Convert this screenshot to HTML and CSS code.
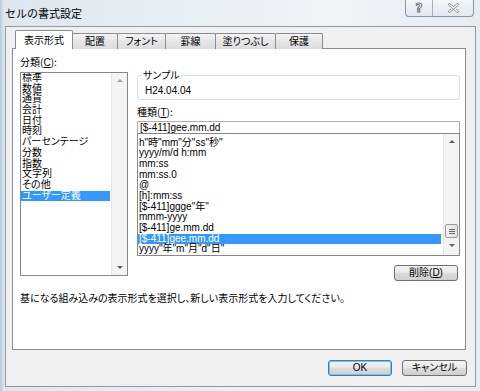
FILE: index.html
```html
<!DOCTYPE html>
<html lang="ja">
<head>
  <meta charset="UTF-8" />
  <title>セルの書式設定</title>
  <link rel="stylesheet" href="styles.css">
</head>
<body>
  <div class="window">
    <div class="titlebar">
      <span class="title">セルの書式設定</span>
      <div class="caption">
        <span class="cap-btn help">?</span>
        <span class="cap-btn close">
          <svg width="11" height="10" viewBox="0 0 11 10"><path d="M1.5 1.5 L9.5 8.5 M9.5 1.5 L1.5 8.5" stroke="#7d848c" stroke-width="2.6" stroke-linecap="round"/><path d="M1.5 1.5 L9.5 8.5 M9.5 1.5 L1.5 8.5" stroke="#ffffff" stroke-width="1.2" stroke-linecap="round"/></svg>
        </span>
      </div>
    </div>

    <div class="client">
      <div class="tabs">
        <span class="tab active">表示形式</span>
        <span class="tab t2">配置</span>
        <span class="tab t3">フォント</span>
        <span class="tab t4">罫線</span>
        <span class="tab t5">塗りつぶし</span>
        <span class="tab t6">保護</span>
      </div>

      <div class="panel">
        <div class="panel-main">
          <div class="category">
            <label class="field-label">分類(<u>C</u>):</label>
            <div class="listbox cat-list">
              <ul class="items">
                <li>標準</li>
                <li>数値</li>
                <li>通貨</li>
                <li>会計</li>
                <li>日付</li>
                <li>時刻</li>
                <li>パーセンテージ</li>
                <li>分数</li>
                <li>指数</li>
                <li>文字列</li>
                <li>その他</li>
                <li class="selected">ユーザー定義</li>
              </ul>
              <div class="scrollbar">
                <span class="arrow up"></span>
                <span class="track"></span>
                <span class="arrow down"></span>
              </div>
            </div>
          </div>

          <div class="format">
            <fieldset class="sample">
              <legend>サンプル</legend>
              <div class="sample-value">H24.04.04</div>
            </fieldset>

            <label class="field-label type-label">種類(<u>T</u>):</label>
            <div class="textbox">[$-411]gee.mm.dd</div>
            <div class="listbox type-list">
              <ul class="items">
                <li>h"時"mm"分"ss"秒"</li>
                <li>yyyy/m/d h:mm</li>
                <li>mm:ss</li>
                <li>mm:ss.0</li>
                <li>@</li>
                <li>[h]:mm:ss</li>
                <li>[$-411]ggge"年"</li>
                <li>mmm-yyyy</li>
                <li>[$-411]ge.mm.dd</li>
                <li class="selected">[$-411]gee.mm.dd</li>
                <li>yyyy"年"m"月"d"日"</li>
              </ul>
              <div class="scrollbar">
                <span class="arrow up"></span>
                <span class="track"></span>
                <span class="thumb"><i></i><i></i><i></i></span>
                <span class="arrow down"></span>
              </div>
            </div>
            <div class="btn-row">
              <button class="btn delete">削除(<u>D</u>)</button>
            </div>
          </div>
        </div>

        <p class="hint">基になる組み込みの表示形式を選択し、新しい表示形式を入力してください。</p>
      </div>

      <div class="dialog-buttons">
        <button class="btn default">OK</button>
        <button class="btn">キャンセル</button>
      </div>
    </div>
  </div>
</body>
</html>
```

FILE: styles.css
```css
body {
  margin: 0;
  font-family: "Liberation Sans", "Noto Sans CJK JP", sans-serif;
  font-size: 10px;
  color: #000;
  background: #d9e3ec;
}
.window {
  width: 480px;
  height: 391px;
  background: linear-gradient(90deg, #b9c9da 0, #dfe7ef 4px, #e9eef3 40%, #f1f4f7 70%, #e6ecf1 100%);
}
.titlebar {
  height: 26px;
  display: flex;
  justify-content: space-between;
  align-items: flex-start;
}
.title {
  font-family: "Noto Sans CJK JP", sans-serif;
  font-size: 11px;
  line-height: 26px;
  padding-left: 5px;
}
.caption {
  display: flex;
  margin-right: 6px;
  height: 16px;
  border: 1px solid #8d96a0;
  border-top: none;
  border-radius: 0 0 4px 4px;
  background: linear-gradient(#f4f6f8, #e3e8ed);
}
.cap-btn {
  display: flex;
  align-items: center;
  justify-content: center;
  height: 16px;
}
.help {
  width: 26px;
  font-family: "DejaVu Sans", sans-serif;
  font-weight: bold;
  font-size: 12px;
  color: #fff;
  -webkit-text-stroke: 1px #6f767e;
  border-right: 1px solid #a8b0b8;
}
.close {
  width: 40px;
}
.client {
  margin: 0 4px 0 5px;
  height: 359px;
  border: 1px solid #8e99a4;
  background: #f0f0f0;
}
.tabs {
  display: flex;
  align-items: flex-end;
  height: 22px;
  padding-left: 9px;
  margin-bottom: -1px;
  position: relative;
  font-family: "Noto Sans CJK JP", sans-serif;
  font-feature-settings: "palt";
}
.tab {
  height: 15px;
  line-height: 14px;
  text-align: center;
  border: 1px solid #898c95;
  border-bottom: none;
  margin-left: -1px;
  border-radius: 2px 2px 0 0;
  background: linear-gradient(#f4f4f4, #e6e6e6 50%, #dcdcdc);
}
.tab.active {
  width: 56px;
  height: 18px;
  line-height: 17px;
  margin-left: 0;
  background: #fff;
  position: relative;
  z-index: 1;
}
.t2 { width: 44px; }
.t3 { width: 47px; }
.t4 { width: 49px; }
.t5 { width: 59px; }
.t6 { width: 46px; }
.panel {
  margin: 0 9px 0 6px;
  height: 300px;
  border: 1px solid #898c95;
  background: #fff;
  padding: 6px 0 0 7px;
  box-sizing: border-box;
  height: 302px;
}
.panel-main {
  display: flex;
  gap: 9px;
}
.category {
  width: 108px;
}
.field-label {
  display: block;
  font-family: "Noto Sans CJK JP", sans-serif;
  font-size: 10px;
  line-height: 14px;
}
.field-label u {
  font-family: "Liberation Sans", sans-serif;
}
.listbox {
  display: flex;
  border: 1px solid #828790;
  background: #fff;
  overflow: hidden;
}
.cat-list {
  margin-top: 2px;
  height: 202px;
}
.items {
  list-style: none;
  margin: 0;
  padding: 0 1px 0 0;
  flex: 1;
  font-family: "Liberation Sans", "Noto Sans CJK JP", sans-serif;
  font-feature-settings: "palt";
}
.items li {
  height: 10.7px;
  line-height: 10.7px;
  padding-left: 1px;
  white-space: nowrap;
}
.items li.selected {
  background: #3399ff;
  color: #fff;
}
.scrollbar {
  width: 15px;
  display: flex;
  flex-direction: column;
  background: #f4f4f4;
  border-left: 1px solid #e6e6e6;
  position: relative;
}
.arrow {
  height: 15px;
  position: relative;
}
.arrow::after {
  content: "";
  position: absolute;
  left: 5px;
  top: 6px;
  border-left: 3px solid transparent;
  border-right: 3px solid transparent;
}
.arrow.up::after {
  border-bottom: 3px solid #a3a3a3;
}
.arrow.down::after {
  border-top: 3px solid #5e5e5e;
}
.track {
  flex: 1;
}
.format {
  width: 323px;
}
.sample {
  margin: 15px 0 0;
  padding: 4px 6px 1px;
  border: 1px solid #d5dfe5;
  border-radius: 3px;
}
.sample legend {
  padding: 0 1px;
  margin-left: -2px;
  font-family: "Noto Sans CJK JP", sans-serif;
  font-feature-settings: "palt";
  line-height: 10px;
}
.sample-value {
  line-height: 14px;
  padding-left: 1px;
}
.type-label {
  margin-top: 6px;
  line-height: 12px;
}
.textbox {
  margin-top: 2px;
  height: 11px;
  line-height: 11px;
  border: 1px solid #abadb3;
  padding-left: 2px;
  background: #fff;
}
.type-list {
  margin-top: -1px;
  height: 121px;
}
.type-list .items {
  padding-top: 3.6px;
  padding-right: 2px;
}
.type-list .scrollbar .arrow.up::after {
  border-bottom-color: #5e5e5e;
}
.type-list .track {
  flex: 0 0 75px;
}
.thumb {
  height: 14px;
  margin: 0 1px;
  border: 1px solid #9a9a9a;
  border-radius: 2px;
  box-sizing: border-box;
  background: linear-gradient(90deg, #f3f3f3, #e2e2e2);
  display: flex;
  flex-direction: column;
  justify-content: center;
  align-items: center;
  gap: 1px;
}
.thumb i {
  width: 6px;
  height: 1px;
  background: #6b6b6b;
}
.btn-row {
  display: flex;
  justify-content: flex-end;
  margin-top: 9px;
  padding-right: 2px;
}
.btn {
  height: 16px;
  padding: 0;
  border: 1px solid #707070;
  border-radius: 3px;
  background: linear-gradient(#f2f2f2, #ebebeb 45%, #dddddd 50%, #cfcfcf);
  font-family: "Liberation Sans", "Noto Sans CJK JP", sans-serif;
  font-feature-settings: "palt";
  font-size: 10px;
  line-height: 14px;
  color: #000;
  width: 65px;
}
.delete {
  width: 64px;
}
.hint {
  margin: 11px 0 0;
  font-family: "Noto Sans CJK JP", sans-serif;
  font-feature-settings: "palt";
  font-size: 10px;
  line-height: 12px;
}
.dialog-buttons {
  display: flex;
  justify-content: flex-end;
  gap: 10px;
  margin: 10px 8px 0 0;
}
.btn.default {
  width: 64px;
  border-color: #3c7fb1;
  box-shadow: inset 0 0 0 1px #6fc3ec;
}
```
